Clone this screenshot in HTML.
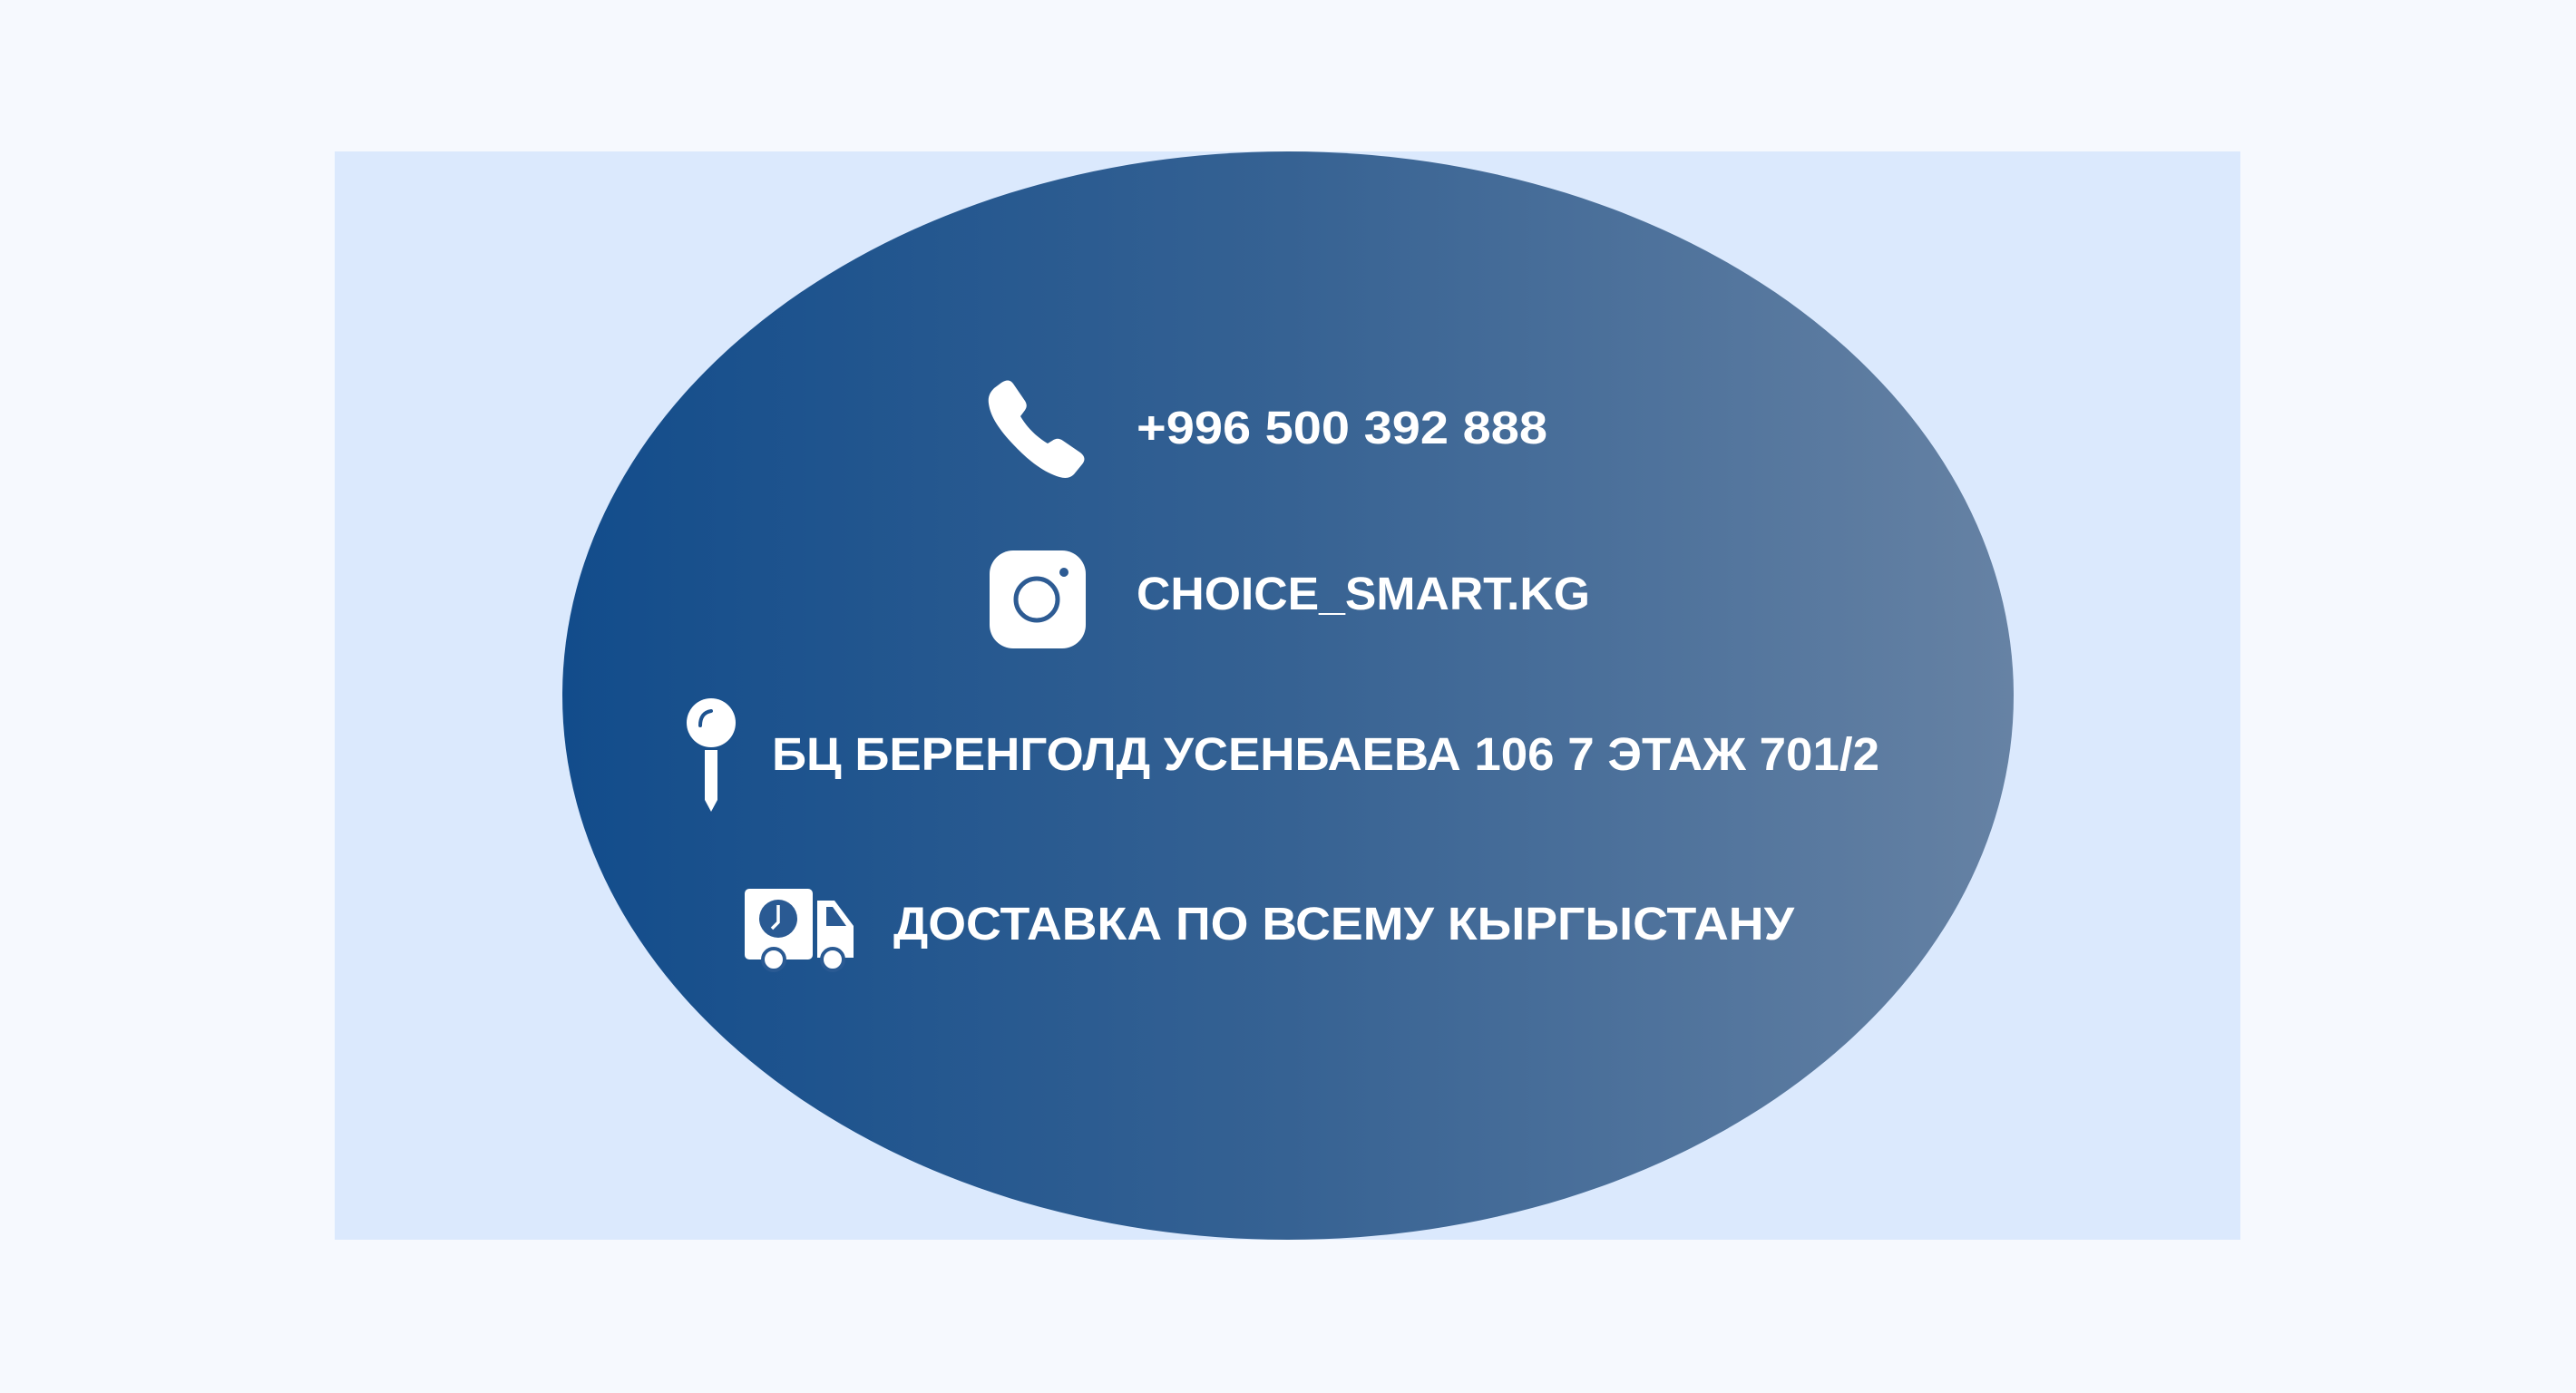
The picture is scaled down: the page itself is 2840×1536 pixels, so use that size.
<!DOCTYPE html>
<html><head><meta charset="utf-8"><style>
html,body{margin:0;padding:0;background:#f6f9fe;}
svg{display:block}
text{font-family:"Liberation Sans",sans-serif;font-weight:bold;fill:#fff;}
</style></head><body>
<svg width="2840" height="1536" viewBox="0 0 2840 1536" xmlns="http://www.w3.org/2000/svg">
<defs>
<linearGradient id="g" x1="619" y1="0" x2="2220" y2="0" gradientUnits="userSpaceOnUse">
<stop offset="0" stop-color="#124c8b"/>
<stop offset="0.5" stop-color="#366293"/>
<stop offset="1" stop-color="#6682a4"/>
</linearGradient>
</defs>
<rect x="0" y="0" width="2840" height="1536" fill="#f6f9fe"/>
<rect x="369" y="167" width="2101" height="1200" fill="#dbe9fd"/>
<ellipse cx="1420" cy="767" rx="800" ry="600" fill="url(#g)"/>
<!-- phone -->
<path d="M1104 422 C1110 418 1114 419 1117 423 L1130 442 C1133 447 1132 450 1128 455 L1125 459 C1132 471 1143 482 1155 489 L1160 486 C1164 483 1168 483 1172 486 L1191 499 C1196 503 1197 507 1193 512 L1184 523 C1180 527 1175 528 1168 526 C1150 521 1132 506 1117 490 C1102 474 1092 460 1090 445 C1089 438 1091 433 1096 428 Z" fill="#fff"/>
<text x="1253" y="489" font-size="51" textLength="453" lengthAdjust="spacingAndGlyphs">+996 500 392 888</text>
<!-- instagram -->
<rect x="1091" y="607" width="106" height="108" rx="26" fill="#fff"/>
<circle cx="1143" cy="661" r="23" fill="none" stroke="#2d5b93" stroke-width="5"/>
<circle cx="1173" cy="631" r="5" fill="#2d5b93"/>
<text x="1253" y="672" font-size="51" textLength="500" lengthAdjust="spacingAndGlyphs">CHOICE_SMART.KG</text>
<!-- pin -->
<circle cx="784" cy="797" r="27" fill="#fff"/>
<path d="M772 800 Q772 786 784 784" fill="none" stroke="#1e5390" stroke-width="4" stroke-linecap="round"/>
<path d="M777 827 L791 827 L791 882 L784 895 L777 882 Z" fill="#fff"/>
<text x="851" y="849" font-size="51" textLength="1221" lengthAdjust="spacingAndGlyphs">БЦ БЕРЕНГОЛД УСЕНБАЕВА 106 7 ЭТАЖ 701/2</text>
<!-- truck -->
<rect x="821" y="980" width="75" height="78" rx="5" fill="#fff"/>
<path d="M901 993 L920 993 L941 1021 L941 1056 L901 1056 Z" fill="#fff"/>
<path d="M911 1000 L918 1000 L933 1021 L911 1021 Z" fill="#2a5a93"/>
<circle cx="858" cy="1013" r="21" fill="#2a5a93"/>
<path d="M858 998 L858 1017 L851 1024" fill="none" stroke="#fff" stroke-width="3.5"/>
<circle cx="853" cy="1058" r="12" fill="#fff" stroke="#2a5a93" stroke-width="4"/>
<circle cx="918" cy="1058" r="12" fill="#fff" stroke="#2a5a93" stroke-width="4"/>
<text x="985" y="1036" font-size="51" textLength="993" lengthAdjust="spacingAndGlyphs">ДОСТАВКА ПО ВСЕМУ КЫРГЫСТАНУ</text>
</svg>
</body></html>
